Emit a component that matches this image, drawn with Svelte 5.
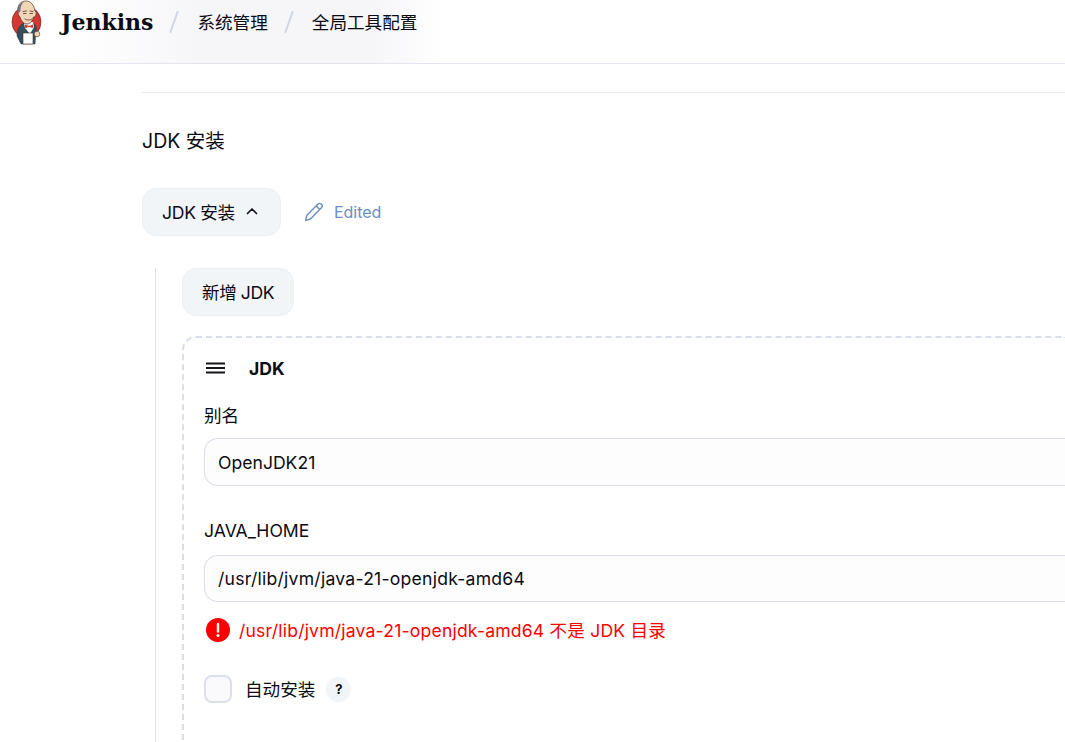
<script lang="ts">
	const crumbs = ['系统管理', '全局工具配置'];
	const javaHome = '/usr/lib/jvm/java-21-openjdk-amd64';
</script>

<header class="topbar">
	<div class="brand">
		<svg class="logo" width="34" height="46" viewBox="0 0 34 46">
			<ellipse cx="16.500" cy="22" rx="14.500" ry="15.500" fill="#d33833" stroke="#6f2a28" stroke-width="0.700" />
			<path d="M7 36c0-7 3-12 8-13l8 0c3 2 4 5 3 9l-1 12H11z" fill="#335061" stroke="#22323d" stroke-width="0.500" />
			<path d="M14 23l9-1 1 5-4 7-5-6z" fill="#fff" />
			<path d="M8 11C7 5 11 1 16 1c5 0 8 4 9 10 1.500 0 1.500 3 .5 5-.5 1-1.500 1-2 1-1 4-3 7-6.500 7-3 0-6-3-7-7-1.500-1-2-3-2-6z" fill="#f0d6b7" stroke="#49352a" stroke-width="0.700" />
			<path d="M8 13C6.500 7 10 2.500 14 2c-3 2-3.500 6-3.500 9-.5 1-1.500 2-2.500 2z" fill="#77757a" />
			<path d="M13 11.500l3.500-.5M20 11l3 .5M13.500 13.500h2.500M20 13.500h2.500M15 19c2 1.500 5 1.500 7 0" fill="none" stroke="#49352a" stroke-width="0.800" stroke-linecap="round" />
			<path d="M15 24.500l4 1.500 4-1.500 0 3.500-4-1-4 1z" fill="#d33833" />
			<path d="M13 33h10v11H13z" fill="#fff" stroke="#49352a" stroke-width="0.600" />
			<circle cx="27" cy="34" r="2.800" fill="#f0d6b7" stroke="#49352a" stroke-width="0.600" />
		</svg>
		<span class="wordmark">Jenkins</span>
	</div>
	{#each crumbs as crumb}
		<svg class="slash" width="10" height="22" viewBox="0 0 10 22"><path d="M8.500 1 1.500 21" stroke="#cdd6e6" stroke-width="2" stroke-linecap="round" /></svg>
		<span class="crumb">{crumb}</span>
	{/each}
</header>

<main class="page">
	<hr class="rule" />
	<h2 class="section-title">JDK 安装</h2>

	<div class="toggle-row">
		<button class="btn toggle">
			JDK 安装
			<svg width="16" height="16" viewBox="0 0 16 16" fill="none"><path d="M3.500 10.500 8 6l4.500 4.500" stroke="#14141f" stroke-width="1.700" stroke-linecap="round" stroke-linejoin="round" /></svg>
		</button>
		<span class="edited">
			<svg width="20" height="20" viewBox="1 1 18 18" fill="none"><path d="M2.500 17.500l1-4.500L13.500 3c1-1 2.300-1 3.200 0 .9.900.9 2.200 0 3.100L6.800 16.300z M12 4.500l3.500 3.500" stroke="#6a8fc0" stroke-width="1.300" stroke-linejoin="round" /></svg>
			Edited
		</span>
	</div>

	<div class="repeatable">
		<button class="btn add">新增 JDK</button>

		<section class="card">
			<div class="card-head">
				<svg width="19" height="12" viewBox="0 0 19 12"><path d="M0 1.500h19M0 6h19M0 10.500h19" stroke="#14141f" stroke-width="1.800" /></svg>
				<strong>JDK</strong>
			</div>

			<label class="field-label" for="alias">别名</label>
			<input id="alias" class="text-input" value="OpenJDK21" />

			<label class="field-label home" for="home">JAVA_HOME</label>
			<input id="home" class="text-input path" value={javaHome} />

			<div class="error">
				<svg width="24" height="24" viewBox="0 0 24 24"><circle cx="12" cy="12" r="12" fill="#fe0000" /><path d="M12 6v7.500" stroke="#fff" stroke-width="2.400" stroke-linecap="round" /><circle cx="12" cy="17.500" r="1.500" fill="#fff" /></svg>
				<span>{javaHome} 不是 JDK 目录</span>
			</div>

			<div class="check-row">
				<span class="checkbox"></span>
				<span class="check-label">自动安装</span>
				<span class="help">?</span>
			</div>
		</section>
	</div>
</main>

<style>
	:global(body) {
		margin: 0;
		background: #fff;
		overflow: hidden;
		color: #0b0b14;
		font-family: Inter, 'Noto Sans CJK SC', sans-serif;
		font-size: 17.6px;
	}

	.topbar {
		display: flex;
		align-items: center;
		height: 63px;
		padding-left: 10px;
		border-bottom: 1px solid #e4e4ee;
		background: linear-gradient(90deg, #fff 70px, #f6f6f9 200px, #f6f6f9 370px, #fff 445px);
	}

	.brand {
		display: flex;
		align-items: center;
		gap: 17px;
		margin-top: -17px;
	}

	.wordmark {
		margin-top: -2px;
		font-family: 'DejaVu Serif', serif;
		font-weight: 700;
		font-size: 22px;
	}

	.slash {
		margin: -20px 0 0 16px;
	}

	.crumb {
		margin: -20px 0 0 18px;
	}

	.page {
		padding-left: 142px;
	}

	.rule {
		margin: 28px 0 0;
		border: none;
		border-top: 1px solid #e8e8ee;
	}

	.section-title {
		margin: 36px 0 0;
		font-size: 19.500px;
		line-height: 24px;
		font-weight: 400;
	}

	.toggle-row {
		display: flex;
		align-items: center;
		gap: 23px;
		margin-top: 35px;
	}

	.btn {
		display: inline-flex;
		align-items: center;
		gap: 9px;
		height: 48px;
		padding: 0 20px 2px 19px;
		border: 1px solid #eceff4;
		border-radius: 14px;
		background: #f2f5f8;
		color: inherit;
		font: inherit;
		letter-spacing: -0.300px;
	}

	.btn.add {
		padding-right: 19px;
		letter-spacing: -0.450px;
	}

	.edited {
		display: flex;
		align-items: center;
		gap: 10px;
		color: #6a8fc0;
		font-size: 16px;
	}

	.repeatable {
		margin: 32px 0 0 13px;
		padding-left: 26px;
		border-left: 1px solid #dde2ec;
	}

	.card {
		box-sizing: border-box;
		height: 440px;
		margin-top: 20px;
		padding: 18px 0 0 20px;
		border: 2px dashed #d8dfe9;
		border-right: none;
		border-radius: 14px 0 0 14px;
	}

	.card-head {
		display: flex;
		align-items: center;
		gap: 24px;
		height: 24px;
		padding-left: 2px;
	}

	.card-head strong {
		font-weight: 700;
	}

	.field-label {
		display: block;
		margin-top: 24px;
		line-height: 24px;
	}

	.field-label.home {
		margin-top: 33px;
	}

	.text-input {
		display: block;
		box-sizing: border-box;
		width: 100%;
		height: 48px;
		margin-top: 10px;
		padding: 0 13px;
		border: 1px solid #dcdde9;
		border-right: none;
		border-radius: 14px 0 0 14px;
		background: #fdfdfe;
		color: inherit;
		font: inherit;
	}

	.text-input.path {
		height: 47px;
		margin-top: 12px;
		letter-spacing: 0.230px;
	}

	.error {
		display: flex;
		align-items: center;
		gap: 9px;
		margin-top: 15px;
		padding-left: 2px;
		color: #fe0000;
		letter-spacing: 0.180px;
	}

	.check-row {
		display: flex;
		align-items: center;
		margin-top: 33px;
	}

	.checkbox {
		box-sizing: border-box;
		width: 28px;
		height: 28px;
		margin-right: 14px;
		border: 2px solid #dcdfec;
		border-radius: 8px;
		background: #fafafd;
	}

	.check-label {
		margin: -2px 0 0 -1px;
	}

	.help {
		display: grid;
		place-items: center;
		width: 25px;
		height: 25px;
		margin-left: 11px;
		border-radius: 50%;
		background: #f2f5f8;
		font-size: 13px;
		font-weight: 700;
	}
</style>
